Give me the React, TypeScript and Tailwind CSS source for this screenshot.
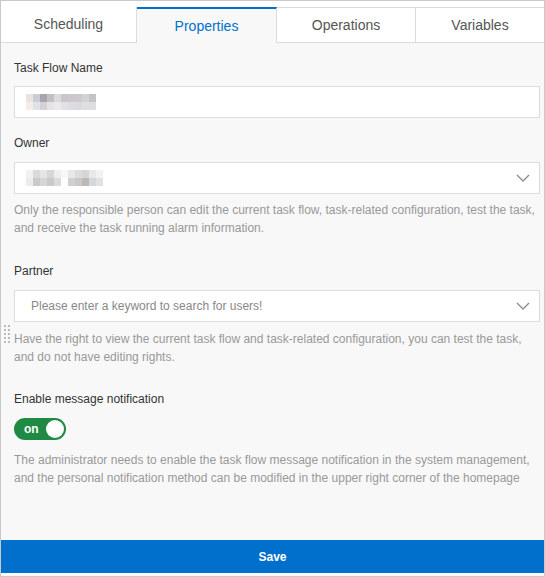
import React from 'react';

const tabs = [
  { name: 'Scheduling', w: 'w-[136px]' },
  { name: 'Properties', w: 'w-[140px]', active: true },
  { name: 'Operations', w: 'w-[139px]' },
  { name: 'Variables', w: 'flex-1' },
];

// pixelated (masked) values
const nameBlur = [
  ['#ece2e0', '#c9ced6', '#a9a6ab', '#c4c0c2', '#dcd9df', '#c8c8cc', '#cfc7cd', '#cdc9d0', '#d4d2d6', '#c3c3c6'],
  ['#f3ece9', '#e2e1e8', '#d5d2d7', '#e6e3e6', '#ece8ec', '#e3e0e6', '#dedbe1', '#dcd9df', '#e0dde3', '#dedde1'],
];
const ownerBlur = [
  ['#f1f1f1', '#dadada', '#e5e5e5', '#d6d6d6', '#eeeeee', '#f7f7f7', '#e8e8e8', '#dcdcdc', '#d6d6d6', '#e8e8e8', '#f2f2f2'],
  ['#ececec', '#c9c9cc', '#d2d6d6', '#c8cacc', '#d9dbdc', '#ffffff', '#d0d0d2', '#cbc8c8', '#c0b8b6', '#d5d8d8', '#e0e3e3'],
];

function Blur({ rows }: { rows: string[][] }) {
  return (
    <div className="flex flex-col">
      {rows.map((row, i) => (
        <div key={i} className="flex">
          {row.map((c, j) => (
            <div key={j} className="h-[8px] w-[7px]" style={{ backgroundColor: c }} />
          ))}
        </div>
      ))}
    </div>
  );
}

function Chevron() {
  return (
    <svg width="14" height="8" viewBox="0 0 14 8" fill="none" className="mr-[9px]">
      <path d="M1 1l6 6 6-6" stroke="#8a8a8a" strokeWidth="1.3" />
    </svg>
  );
}

export default function App() {
  return (
    <div
      className="relative flex h-[577px] w-[545px] flex-col border border-[#c9c9c9] bg-[#f8f8f8] text-[12px] text-[#333]"
      style={{ fontFamily: '"Liberation Sans", Arial, sans-serif' }}
    >
      {/* Tabs */}
      <div className="flex bg-white pt-[6px]">
        {tabs.map((t, i) =>
          t.active ? (
            <div
              key={t.name}
              className={`${t.w} flex h-[36px] items-center justify-center border-t-2 border-r border-[#dcdcdc] border-t-[#0070cc] bg-[#f8f8f8] text-[14px] text-[#0070cc]`}
            >
              {t.name}
            </div>
          ) : (
            <div
              key={t.name}
              className={`${t.w} flex h-[36px] items-center justify-center border-b border-[#dcdcdc] bg-white text-[14px] text-[#555] ${
                i === 0 ? 'border-r' : 'border-t border-r'
              } ${i === 3 ? 'border-r-0' : ''}`}
            >
              {t.name}
            </div>
          )
        )}
      </div>

      {/* Form */}
      <div className="flex flex-col pl-[13px] pr-[4px] pt-[16px]">
        <label className="leading-[18px]">Task Flow Name</label>
        <div className="mt-[9px] flex h-[32px] items-center border border-[#dcdcdc] bg-white pl-[11px]">
          <Blur rows={nameBlur} />
        </div>

        <label className="mt-[16px] leading-[18px]">Owner</label>
        <div className="mt-[10px] flex h-[32px] items-center justify-between border border-[#dcdcdc] bg-white pl-[11px]">
          <Blur rows={ownerBlur} />
          <Chevron />
        </div>
        <p className="mt-[7px] leading-[18px] text-[#999]">
          Only the responsible person can edit the current task flow, task-related configuration, test the task, and
          receive the task running alarm information.
        </p>

        <label className="mt-[25px] leading-[18px]">Partner</label>
        <div className="mt-[10px] flex h-[32px] items-center justify-between border border-[#dcdcdc] bg-white pl-[16px]">
          <span className="text-[12px] text-[#888]">Please enter a keyword to search for users!</span>
          <Chevron />
        </div>
        <p className="mt-[8px] leading-[18px] text-[#999]">
          Have the right to view the current task flow and task-related configuration, you can test the task, and do
          not have editing rights.
        </p>

        <label className="mt-[24px] leading-[18px]">Enable message notification</label>
        <div className="mt-[10px] flex h-[22px] w-[52px] items-center justify-between rounded-full bg-[#1f8a43] pl-[10px] pr-[2px]">
          <span className="text-[12px] font-bold text-white">on</span>
          <span className="h-[18px] w-[18px] rounded-full bg-white" />
        </div>
        <p className="mt-[11px] leading-[18px] text-[#999]">
          The administrator needs to enable the task flow message notification in the system management, and the
          personal notification method can be modified in the upper right corner of the homepage
        </p>
      </div>

      {/* Drag handle */}
      <div className="absolute left-[3px] top-[324px] grid grid-cols-2 gap-x-[2px] gap-y-[2px]">
        {Array.from({ length: 10 }).map((_, i) => (
          <span key={i} className="h-[2px] w-[2px] bg-[#bbb]" />
        ))}
      </div>

      <button className="mb-[3px] mt-auto h-[33px] w-full bg-[#0070cc] text-[12px] font-bold text-white">Save</button>
    </div>
  );
}
